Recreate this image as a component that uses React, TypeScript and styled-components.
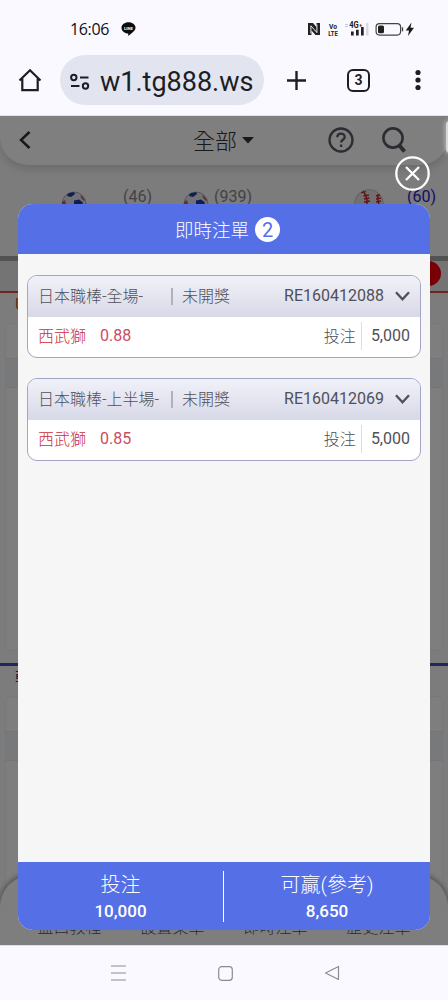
import React from "react";
import styled, { createGlobalStyle } from "styled-components";

const Global = createGlobalStyle`
  * { box-sizing: border-box; }
  body { margin: 0; background: #faf9ff; font-family: Roboto, "Noto Sans CJK TC", sans-serif; }
  svg { display: block; flex: none; }
`;

const Phone = styled.div`
  width: 448px;
  height: 1000px;
  display: flex;
  flex-direction: column;
  overflow: hidden;
  background: #faf9ff;
`;

const StatusBar = styled.div`
  height: 55px;
  padding: 2px 32px 0 70px;
  display: flex;
  align-items: center;
`;
const Clock = styled.span`
  font: 500 16px/20px "Open Sans", sans-serif;
  letter-spacing: -0.35px;
  color: #111;
  width: 51px;
  white-space: nowrap;
`;
const StatusIcons = styled.div`
  margin-left: auto;
  display: flex;
  align-items: center;
`;

const BrowserBar = styled.div`
  height: 61px;
  padding: 0 18px 10px 18px;
  display: flex;
  align-items: center;
  border-bottom: 1px solid #e3e3e6;
`;
const UrlPill = styled.div`
  width: 204px;
  height: 50px;
  margin-left: 18px;
  border-radius: 25px;
  background: #e2e4f0;
  display: flex;
  align-items: center;
  padding: 3px 0 0 10px;
  gap: 10px;
  font-size: 27px;
  color: #1d1e24;
`;
const TabCount = styled.div`
  width: 23px;
  height: 23px;
  margin-left: 40px;
  border: 2px solid #1d1e24;
  border-radius: 6px;
  display: flex;
  align-items: center;
  justify-content: center;
  font-weight: 700;
  font-size: 14px;
  color: #1d1e24;
`;

const Viewport = styled.div`
  position: relative;
  height: 829px;
  overflow: hidden;
  background: #fff;
`;

const Page = styled.div`
  height: 829px;
  display: flex;
  flex-direction: column;
  background: #f9f9f9;
`;
const TopArea = styled.div`
  height: 140px;
  flex: none;
  background: #f8f8f8;
`;
const PageHeader = styled.div`
  height: 49px;
  display: flex;
  align-items: center;
  padding: 0 41px 1px 19px;
  background: #fff;
  border-radius: 0 0 28px 28px;
  box-shadow: 0 4px 10px rgba(0, 0, 0, 0.14);
`;
const PageTitle = styled.div`
  display: flex;
  align-items: center;
  gap: 5px;
  margin-left: 162px;
  width: 136px;
  font-size: 22px;
  line-height: 30px;
  font-weight: 300;
  color: #333;
`;
const TitleText = styled.span`
  padding-top: 3px;
`;
const SportTabs = styled.div`
  display: flex;
  padding: 20px 0 0 61px;
  height: 60px;
`;
const Sport = styled.div<{ $w: number; $gap: number; $on?: boolean }>`
  width: ${(p) => p.$w}px;
  display: flex;
  align-items: flex-start;
  gap: ${(p) => p.$gap}px;
  font-size: 16px;
  line-height: 24px;
  color: ${(p) => (p.$on ? "#2a20c8" : "#85858e")};
`;
const FilterBar = styled.div`
  flex: none;
  height: 37px;
  display: flex;
  justify-content: flex-end;
  align-items: center;
  padding-right: 7px;
  background: #e9e9ea;
  border-top: 5px solid #a4a4a6;
  border-bottom: 2px solid #e5464c;
`;
const RedDot = styled.div`
  width: 25px;
  height: 25px;
  margin-bottom: 6px;
  border-radius: 50%;
  background: #f0000a;
`;
const League = styled.div<{ $c: string }>`
  flex: none;
  height: 30px;
  padding: 1px 0 0 15px;
  font-size: 16px;
  line-height: 22px;
  color: ${(p) => p.$c};
`;
const MatchCard = styled.div<{ $h: number }>`
  flex: none;
  height: ${(p) => p.$h}px;
  margin: 0 5px;
  border: 1px solid #efeff2;
  border-radius: 7px;
  background: #fcfcfc;
  padding-top: 34px;
`;
const MatchBand = styled.div`
  height: 30px;
  background: #f0f3f7;
  border: solid #e9ebef;
  border-width: 1px 0;
`;
const Divider = styled.div`
  flex: none;
  height: 3px;
  margin-top: 12px;
  background: #4a4aba;
`;
const BottomTabs = styled.div`
  position: absolute;
  left: 0;
  right: 0;
  bottom: 0;
  height: 70px;
  padding: 41px 18px 0;
  display: flex;
  background: #fdfdfd;
  border-radius: 32px 32px 0 0;
  box-shadow: 0 -1px 5px 1px rgba(60, 60, 90, 0.45);
  font-size: 16px;
  font-weight: 300;
  line-height: 24px;
  color: #55565e;
`;
const BottomTab = styled.span`
  flex: 1;
  text-align: center;
`;

const Backdrop = styled.div`
  position: absolute;
  inset: 0;
  background: rgba(0, 0, 0, 0.5);
`;
const EdgeHandle = styled.div`
  position: absolute;
  top: 5px;
  right: -6px;
  width: 8px;
  height: 32px;
  border-radius: 8px;
  background: #d8d8d8;
  box-shadow: 0 0 4px 1px rgba(216, 216, 216, 0.6);
`;
const Modal = styled.div`
  position: absolute;
  left: 18px;
  right: 18px;
  top: 88px;
  height: 726px;
  display: flex;
  flex-direction: column;
  overflow: hidden;
  border-radius: 15px;
  background: #f6f6f7;
`;
const CloseButton = styled.button`
  position: absolute;
  left: 395px;
  top: 40px;
  padding: 0;
  border: 0;
  background: none;
`;
const ModalHeader = styled.div`
  height: 50px;
  flex: none;
  display: flex;
  align-items: center;
  justify-content: center;
  gap: 6px;
  padding-left: 7px;
  background: #556fe7;
  color: #fff;
  font-size: 18.5px;
  font-weight: 300;
`;
const CountBadge = styled.span`
  width: 25px;
  height: 25px;
  border-radius: 50%;
  background: #fff;
  color: #556fe7;
  font-size: 20px;
  font-weight: 400;
  line-height: 26px;
  text-align: center;
`;
const BetList = styled.div`
  flex: 1;
  display: flex;
  flex-direction: column;
  gap: 20px;
  padding: 20.5px 9px;
`;
const BetCard = styled.div`
  height: 83px;
  border: 1px solid #a3a4c6;
  border-radius: 10px;
  overflow: hidden;
  background: #fff;
  font-size: 16px;
  color: #4f5059;
`;
const BetHead = styled.div`
  height: 41px;
  display: flex;
  align-items: center;
  padding: 0 10px 1px;
  background: linear-gradient(#f0f1f8, #d8d9e7);
`;
const BetName = styled.span`
  width: 133px;
  padding-bottom: 1px;
  font-weight: 300;
  white-space: nowrap;
`;
const BetStatus = styled.span`
  display: flex;
  align-items: center;
  gap: 9px;
  padding-bottom: 1px;
  font-weight: 300;
  &::before {
    content: "";
    width: 2px;
    height: 17px;
    margin-top: 2px;
    background: #b0b1bb;
  }
`;
const BetId = styled.span`
  margin-left: auto;
  margin-right: 11px;
`;
const BetBody = styled.div`
  height: 40px;
  display: flex;
  align-items: center;
  padding: 0 10px 2px;
`;
const Team = styled.span`
  color: #cb2f36;
  font-weight: 300;
  margin-right: 14px;
  padding-bottom: 1px;
`;
const Odds = styled.span`
  color: #cc4c60;
`;
const StakeLabel = styled.span`
  margin-left: auto;
  padding-bottom: 1px;
  font-weight: 300;
`;
const Stake = styled.span`
  margin-left: 5px;
  padding-left: 9px;
  border-left: 1px solid #dcdde6;
  line-height: 28px;
`;
const Totals = styled.div`
  height: 68px;
  flex: none;
  display: flex;
  align-items: center;
  background: #556fe7;
  color: #fff;
`;
const Total = styled.div<{ $line?: boolean }>`
  width: ${(p) => (p.$line ? 207 : 205)}px;
  height: 51px;
  display: flex;
  flex-direction: column;
  align-items: center;
  border-left: ${(p) => (p.$line ? "1px solid #fff" : "0")};
`;
const TotalLabel = styled.span`
  font-size: 20px;
  font-weight: 300;
  line-height: 28px;
`;
const TotalValue = styled.span`
  font-size: 17px;
  font-weight: 500;
  line-height: 24px;
`;

const NavBar = styled.div`
  height: 55px;
  display: flex;
  align-items: center;
  padding-left: 110px;
  gap: 91px;
  border-top: 1px solid #e0e0e4;
`;

const SoccerBall = () => (
  <svg width="26" height="26" viewBox="0 0 26 26">
    <circle cx="13" cy="13" r="12" fill="#e2e2ee" stroke="#9a9aae" strokeWidth=".8" />
    <path d="M7 2.500l6-1.500 1 2-4 3-4-1z" fill="#1f3da0" />
    <path d="M13 9.500l5-1 4 3-2 5-7-1z" fill="#1f3da0" />
    <path d="M1 11l3-2 1 4-4 3zM20 4l4 5-1.500 1-3-4z" fill="#c06455" />
  </svg>
);

const Baseball = () => (
  <svg width="30" height="30" viewBox="0 0 30 30">
    <circle cx="15" cy="15" r="14.500" fill="#e4e1e0" stroke="#b0aaaa" strokeWidth=".6" />
    <path d="M9 2Q14 8 13 18M24 5Q23 11 26 18" stroke="#cc2630" strokeWidth="1.500" fill="none" />
    <path d="M7 4l5-1.500M9.500 7l5.500-1M10 10l5.500-1M10 13l6-1M22 7l4-1M22 10l5-1M22 13l5-1" stroke="#cc2630" strokeWidth="1.300" />
  </svg>
);

const bets = [
  { name: "日本職棒-全場-", id: "RE160412088", team: "西武獅", odds: "0.88", stake: "5,000" },
  { name: "日本職棒-上半場-", id: "RE160412069", team: "西武獅", odds: "0.85", stake: "5,000" },
];

export default function App() {
  return (
    <Phone>
      <Global />
      <StatusBar>
        <Clock>16:06</Clock>
        <svg width="15" height="14" viewBox="0 0 15 14">
          <path d="M7.500.3c3.900 0 7 2.400 7 5.500 0 2.700-3 5-6.800 7.800-.5.300-.7 0-.6-.5l.2-1.500C3.500 11.400.5 9 .5 5.800.5 2.700 3.600.3 7.500.3z" fill="#0c0c0c" />
          <text x="7.500" y="7.600" fontSize="4.300" fontWeight="700" textAnchor="middle" fill="#fff">LINE</text>
        </svg>
        <StatusIcons>
          <svg width="109" height="16" viewBox="0 0 109 16">
            <path d="M1 2h5l3.500 4V2H13v12H8.500L4.500 9.500V14H1z" fill="#222" />
            <path d="M3.900 12.500V4.800l6 6.800V3.500" stroke="#faf9ff" strokeWidth=".9" fill="none" />
            <g fill="#222" fontWeight="700" textAnchor="middle">
              <text x="26" y="7.500" fontSize="8" textLength="8" lengthAdjust="spacingAndGlyphs">Vo</text>
              <text x="26" y="14.500" fontSize="8" textLength="9.500" lengthAdjust="spacingAndGlyphs">LTE</text>
              <text x="47" y="7.300" fontSize="8.500" textLength="9.500" lengthAdjust="spacingAndGlyphs">4G</text>
              <text x="53.500" y="5.500" fontSize="5">+</text>
            </g>
            <path d="M38 3.500h3M38 5.500h3" stroke="#c8c8ce" />
            <path d="M44 10.500h2.700v4H44zM49 8.800h2.700v5.700H49zM54 6h2.700v8.500H54z" fill="#222" />
            <path d="M59 2h2.500v12.500H59z" fill="#dadae0" />
            <rect x="69.100" y="2.600" width="24.500" height="11.500" rx="3.500" fill="none" stroke="#444" strokeWidth="1.200" />
            <rect x="71" y="4.500" width="6" height="7.800" rx="1.500" fill="#222" />
            <path d="M95.500 6.300v4" stroke="#444" strokeWidth="1.300" />
            <path d="M104.500 1.500l-5.700 8h3.200l-1 5.500 6-8.200h-3.500z" fill="#1a1a1a" />
          </svg>
        </StatusIcons>
      </StatusBar>
      <BrowserBar>
        <svg width="24" height="24" viewBox="0 0 24 24" fill="none" stroke="#1d1e24" strokeWidth="2.200">
          <path d="M1.500 12.500L12 2.300l10.500 10.200M4.300 10.500v11.700h15.400V10.500" />
        </svg>
        <UrlPill>
          <svg width="20" height="18" viewBox="0 0 20 18" fill="none" stroke="#1d1e24" strokeWidth="2">
            <circle cx="3.800" cy="4.500" r="2.700" />
            <path d="M10 4.500h8.500M1 13h8.500" />
            <circle cx="15.500" cy="13" r="2.700" />
          </svg>
          <span>w1.tg888.ws</span>
        </UrlPill>
        <svg style={{ marginLeft: 22 }} width="21" height="21" viewBox="0 0 21 21" stroke="#1d1e24" strokeWidth="2.400">
          <path d="M10.500 1v19M1 10.500h19" />
        </svg>
        <TabCount>3</TabCount>
        <svg style={{ marginLeft: 45 }} width="6" height="22" viewBox="0 0 6 22" fill="#1d1e24">
          <circle cx="3" cy="3.500" r="2.600" />
          <circle cx="3" cy="11" r="2.600" />
          <circle cx="3" cy="18.500" r="2.600" />
        </svg>
      </BrowserBar>

      <Viewport>
        <Page>
          <TopArea>
            <PageHeader>
              <svg width="12" height="18" viewBox="0 0 12 18" fill="none" stroke="#333" strokeWidth="2.500">
                <path d="M10.500 1L2 9l8.500 8" />
              </svg>
              <PageTitle>
                <TitleText>全部</TitleText>
                <svg width="12" height="7" viewBox="0 0 12 7">
                  <path d="M0 0h12L6 6.500z" fill="#333" />
                </svg>
              </PageTitle>
              <svg width="26" height="26" viewBox="0 0 26 26" fill="none" stroke="#585865" strokeWidth="2.300">
                <circle cx="13" cy="13" r="11.500" />
                <path d="M9.300 10.300c0-4.900 7.400-4.700 7.400-.4 0 2.800-3.600 2.900-3.600 5.700M13.100 17.600v2.400" />
              </svg>
              <svg style={{ marginLeft: 27 }} width="26" height="28" viewBox="0 0 26 28" fill="none" stroke="#585865">
                <circle cx="12" cy="12" r="9.600" strokeWidth="2.600" />
                <path d="M18 19l5.500 6.500" strokeWidth="4" />
              </svg>
            </PageHeader>
            <SportTabs>
              <Sport $w={122} $gap={36}><svg width="26" height="34" viewBox="0 -6 26 34"><SoccerBall /></svg>(46)</Sport>
              <Sport $w={171} $gap={5}><svg width="26" height="34" viewBox="0 -6 26 34"><SoccerBall /></svg>(939)</Sport>
              <Sport $w={94} $gap={23} $on><svg width="30" height="34" viewBox="0 -4 30 34"><Baseball /></svg>(60)</Sport>
            </SportTabs>
          </TopArea>
          <FilterBar><RedDot /></FilterBar>
          <League $c="#c85a32">U</League>
          <MatchCard $h={328}><MatchBand /></MatchCard>
          <Divider />
          <League $c="#34348c">韓</League>
          <MatchCard $h={300}><MatchBand /></MatchCard>
        </Page>
        <BottomTabs>
          <BottomTab>盤口教程</BottomTab>
          <BottomTab>設置菜單</BottomTab>
          <BottomTab>即時注單</BottomTab>
          <BottomTab>歷史注單</BottomTab>
        </BottomTabs>
        <Backdrop />
        <EdgeHandle />
        <Modal>
          <ModalHeader>
            即時注單
            <CountBadge>2</CountBadge>
          </ModalHeader>
          <BetList>
            {bets.map((b) => (
              <BetCard key={b.id}>
                <BetHead>
                  <BetName>{b.name}</BetName>
                  <BetStatus>未開獎</BetStatus>
                  <BetId>{b.id}</BetId>
                  <svg width="15" height="10" viewBox="0 0 15 10" fill="none" stroke="#4f5059" strokeWidth="2.300">
                    <path d="M1 1.200l6.500 7 6.500-7" />
                  </svg>
                </BetHead>
                <BetBody>
                  <Team>{b.team}</Team>
                  <Odds>{b.odds}</Odds>
                  <StakeLabel>投注</StakeLabel>
                  <Stake>{b.stake}</Stake>
                </BetBody>
              </BetCard>
            ))}
          </BetList>
          <Totals>
            <Total>
              <TotalLabel>投注</TotalLabel>
              <TotalValue>10,000</TotalValue>
            </Total>
            <Total $line>
              <TotalLabel>可贏(參考)</TotalLabel>
              <TotalValue>8,650</TotalValue>
            </Total>
          </Totals>
        </Modal>
        <CloseButton aria-label="close">
          <svg width="35" height="35" viewBox="0 0 35 35" fill="none" stroke="#fff" strokeWidth="2.300">
            <circle cx="17.500" cy="17.500" r="16.200" />
            <path d="M11 11l13 13M24 11L11 24" />
          </svg>
        </CloseButton>
      </Viewport>

      <NavBar>
        <svg width="17" height="16" viewBox="0 0 17 16" stroke="#8b8b91" strokeWidth="1.200">
          <path d="M1 1h15M1 8h15M1 15h15" />
        </svg>
        <svg width="15" height="15" viewBox="0 0 15 15" fill="none" stroke="#8b8b91" strokeWidth="1.200">
          <rect x=".7" y=".7" width="13.600" height="13.600" rx="3" />
        </svg>
        <svg width="16" height="16" viewBox="0 0 16 16" fill="none" stroke="#8b8b91" strokeWidth="1.200" strokeLinejoin="round">
          <path d="M14.500 1.500v13L1.500 8z" />
        </svg>
      </NavBar>
    </Phone>
  );
}
